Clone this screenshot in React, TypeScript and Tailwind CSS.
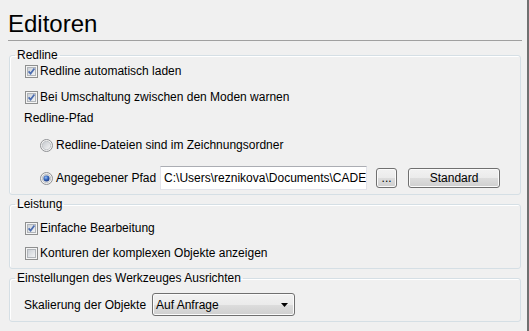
import React from 'react';

const font = { fontFamily: '"Liberation Sans", Arial, sans-serif' };

function CheckBox({ checked }: { checked: boolean }) {
  return (
    <svg width="13" height="13" viewBox="0 0 13 13" className="shrink-0">
      <defs>
        <linearGradient id="cbfill" x1="0" y1="0" x2="1" y2="1">
          <stop offset="0" stopColor="#c9ced4" />
          <stop offset="1" stopColor="#f4f5f6" />
        </linearGradient>
      </defs>
      <rect x="0.5" y="0.5" width="12" height="12" fill="#f4f4f4" stroke="#8e8f8f" />
      <rect x="2.5" y="2.5" width="8" height="8" fill="url(#cbfill)" stroke="#b1b5ba" />
      {checked && (
        <path d="M3.6 6.4 L5.6 8.6 L9.4 3.6" fill="none" stroke="#4b6cb0" strokeWidth="1.7" />
      )}
    </svg>
  );
}

function Radio({ checked }: { checked: boolean }) {
  return (
    <svg width="13" height="13" viewBox="0 0 13 13" className="shrink-0">
      <defs>
        <linearGradient id="rdfill" x1="0" y1="0" x2="1" y2="1">
          <stop offset="0" stopColor="#c4c8cd" />
          <stop offset="1" stopColor="#f6f6f6" />
        </linearGradient>
        <radialGradient id="rddot" cx="0.4" cy="0.35" r="0.7">
          <stop offset="0" stopColor="#9fc3f5" />
          <stop offset="0.45" stopColor="#3d6fc4" />
          <stop offset="1" stopColor="#14307a" />
        </radialGradient>
      </defs>
      <circle cx="6.5" cy="6.5" r="6" fill="#f2f2f2" stroke="#8f9194" />
      <circle cx="6.5" cy="6.5" r="4.2" fill="url(#rdfill)" stroke="#b9bcc0" strokeWidth="0.8" />
      {checked && <circle cx="6.5" cy="6.5" r="3" fill="url(#rddot)" />}
    </svg>
  );
}

function Group({ title, className, children }: { title: string; className?: string; children: React.ReactNode }) {
  return (
    <fieldset
      className={`ml-[9px] w-[512px] min-w-0 rounded-[3px] border border-[#d5dfe5] shadow-[inset_1px_1px_0_#ffffff] ${className ?? ''}`}
    >
      <legend className="ml-[5px] px-[2px] text-[12px] leading-[15px] text-black">{title}</legend>
      {children}
    </fieldset>
  );
}

const btn =
  'h-[20px] rounded-[3px] border border-[#707070] bg-[linear-gradient(to_bottom,#f2f2f2_0%,#ebebeb_50%,#dddddd_51%,#cfcfcf_100%)] shadow-[inset_0_0_0_1px_#fbfbfb] text-[12px] leading-[16px] text-black flex items-center justify-center';

export default function App() {
  return (
    <div className="w-[529px] h-[331px] bg-[#f0f0f0] flex overflow-hidden" style={font}>
      <div className="flex-1 flex flex-col">
        <div className="mt-[10px] ml-[8px] text-[24px] leading-[28px] text-black">Editoren</div>
        <div className="mt-[2px] ml-[8px] w-[514px] h-px bg-[#a0a0a0]" />

        <Group title="Redline" className="mt-[7px] pb-[4px]">
          <div className="flex flex-col text-[12px] text-black">
            <div className="h-[16px] pl-[15px] flex items-center gap-[2px]">
              <CheckBox checked />
              <span>Redline automatisch laden</span>
            </div>
            <div className="mt-[10px] h-[16px] pl-[15px] flex items-center gap-[2px]">
              <CheckBox checked />
              <span>Bei Umschaltung zwischen den Moden warnen</span>
            </div>
            <div className="mt-[5px] h-[16px] pl-[14px] flex items-center">Redline-Pfad</div>
            <div className="mt-[11px] h-[16px] pl-[30px] flex items-center gap-[3px]">
              <Radio checked={false} />
              <span>Redline-Dateien sind im Zeichnungsordner</span>
            </div>
            <div className="mt-[13px] h-[24px] pl-[30px] flex items-center">
              <Radio checked />
              <span className="ml-[3px]">Angegebener Pfad</span>
              <div className="ml-[4px] w-[207px] h-[24px] bg-white border border-[#e2e3ea] border-t-[#abadb3] pl-[3px] flex items-center overflow-hidden whitespace-nowrap">
                C:\Users\reznikova\Documents\CADEditor\Redline
              </div>
              <div className={`ml-[9px] w-[21px] ${btn}`}>...</div>
              <div className={`ml-[11px] w-[92px] ${btn}`}>Standard</div>
            </div>
          </div>
        </Group>

        <Group title="Leistung" className="mt-[2px] pb-[7px]">
          <div className="flex flex-col text-[12px] text-black">
            <div className="mt-[8px] h-[16px] pl-[15px] flex items-center gap-[2px]">
              <CheckBox checked />
              <span>Einfache Bearbeitung</span>
            </div>
            <div className="mt-[9px] h-[16px] pl-[15px] flex items-center gap-[2px]">
              <CheckBox checked={false} />
              <span>Konturen der komplexen Objekte anzeigen</span>
            </div>
          </div>
        </Group>

        <Group title="Einstellungen des Werkzeuges Ausrichten" className="mt-[2px] pb-[5px]">
          <div className="mt-[7px] h-[23px] pl-[14px] flex items-center text-[12px] text-black">
            <span className="w-[128px]">Skalierung der Objekte</span>
            <div className={`w-[143px] !h-[23px] !justify-between pl-[3px] pr-[6px] ${btn}`}>
              <span>Auf Anfrage</span>
              <svg width="7" height="4" viewBox="0 0 7 4">
                <path d="M0 0 H7 L3.5 4 Z" fill="#000" />
              </svg>
            </div>
          </div>
        </Group>
      </div>
      <div className="w-[2px] h-full bg-[#707070]" />
    </div>
  );
}
